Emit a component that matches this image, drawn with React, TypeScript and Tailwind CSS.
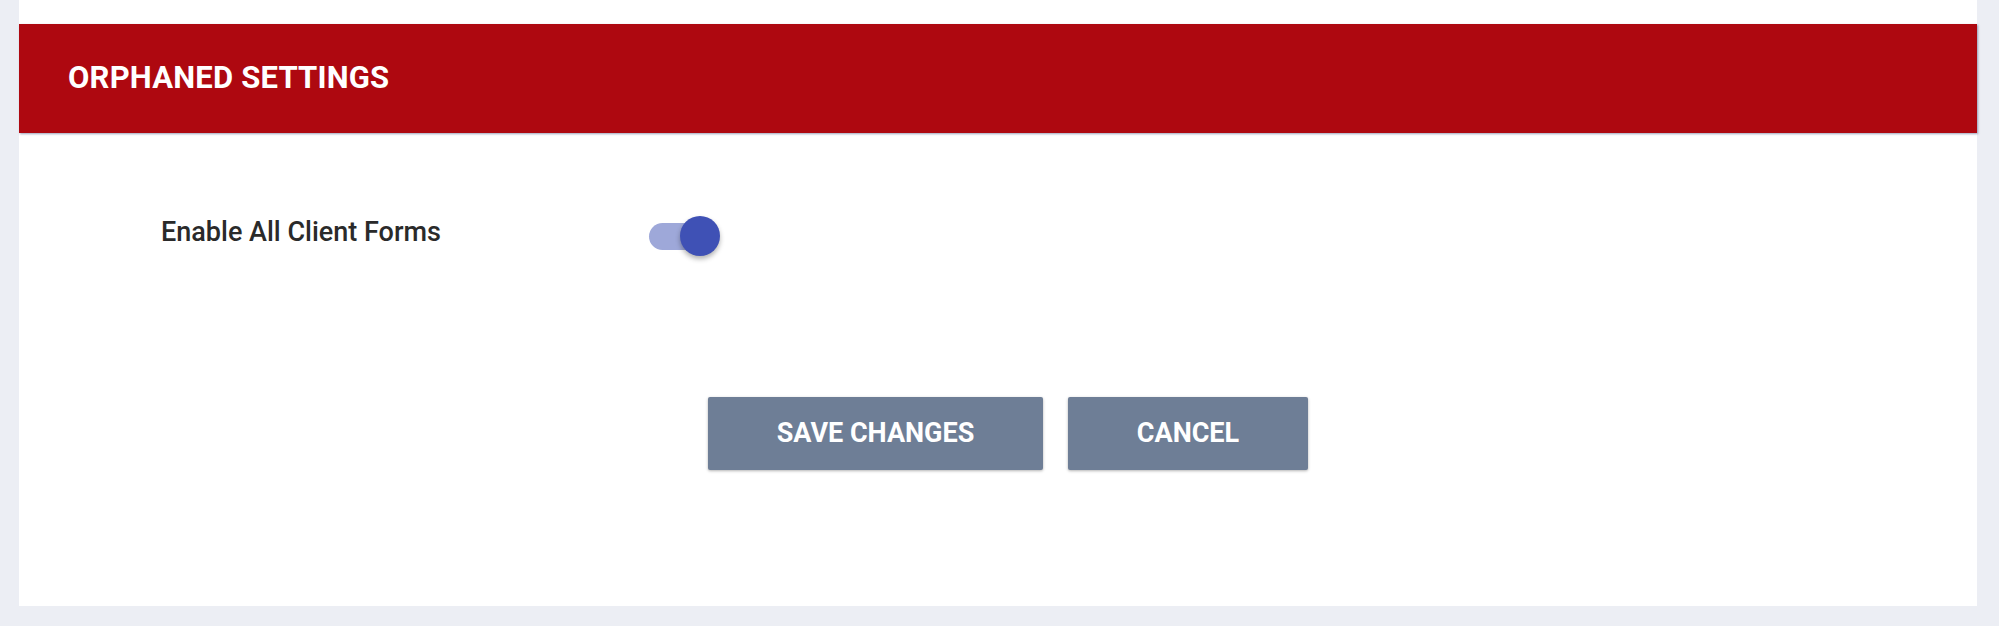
import { useState } from "react";

function Toggle({ on, onChange }: { on: boolean; onChange: (v: boolean) => void }) {
  return (
    <button
      type="button"
      onClick={() => onChange(!on)}
      className="relative h-[40px] w-[71px] shrink-0"
    >
      <span
        className={`absolute left-0 top-[7px] h-[27px] w-[64px] rounded-full ${on ? "bg-[#9ea8d9]" : "bg-[#bdbdbd]"}`}
      />
      <span
        className={`absolute top-0 h-[40px] w-[40px] rounded-full shadow-[0_3px_5px_rgba(0,0,0,0.3)] ${on ? "left-[31px] bg-[#3f51b5]" : "left-0 bg-[#fafafa]"}`}
      />
    </button>
  );
}

export default function App() {
  const [enabled, setEnabled] = useState(true);

  return (
    <div className="h-[626px] w-full bg-[#eceef4] pl-[19px] pr-[22px] font-['Roboto',sans-serif]">
      <div className="flex h-[606px] flex-col bg-white pt-[24px]">
        {/* Header */}
        <div className="flex h-[109px] items-center bg-[#ae0810] pl-[49px] shadow-[1px_1px_2px_rgba(90,100,140,0.6)]">
          <h2 className="text-[31px] font-bold tracking-[0.2px] text-white">ORPHANED SETTINGS</h2>
        </div>

        {/* Settings */}
        <div className="flex h-[123px] items-end pl-[142px]">
          <div className="flex h-[40px] items-center">
            <span className="mb-[8px] w-[488px] text-[27px] leading-[32px] font-medium text-[#2a2a2a]">
              Enable All Client Forms
            </span>
            <Toggle on={enabled} onChange={setEnabled} />
          </div>
        </div>

        {/* Actions */}
        <div className="flex justify-center gap-[25px] pl-[20px] pt-[141px]">
          <button className="h-[73px] w-[335px] rounded-[2px] bg-[#6e7e96] text-[27px] font-bold text-white shadow-[0_1px_3px_rgba(0,0,0,0.3)]">
            SAVE CHANGES
          </button>
          <button className="h-[73px] w-[240px] rounded-[2px] bg-[#6e7e96] text-[27px] font-bold text-white shadow-[0_1px_3px_rgba(0,0,0,0.3)]">
            CANCEL
          </button>
        </div>
      </div>
    </div>
  );
}
